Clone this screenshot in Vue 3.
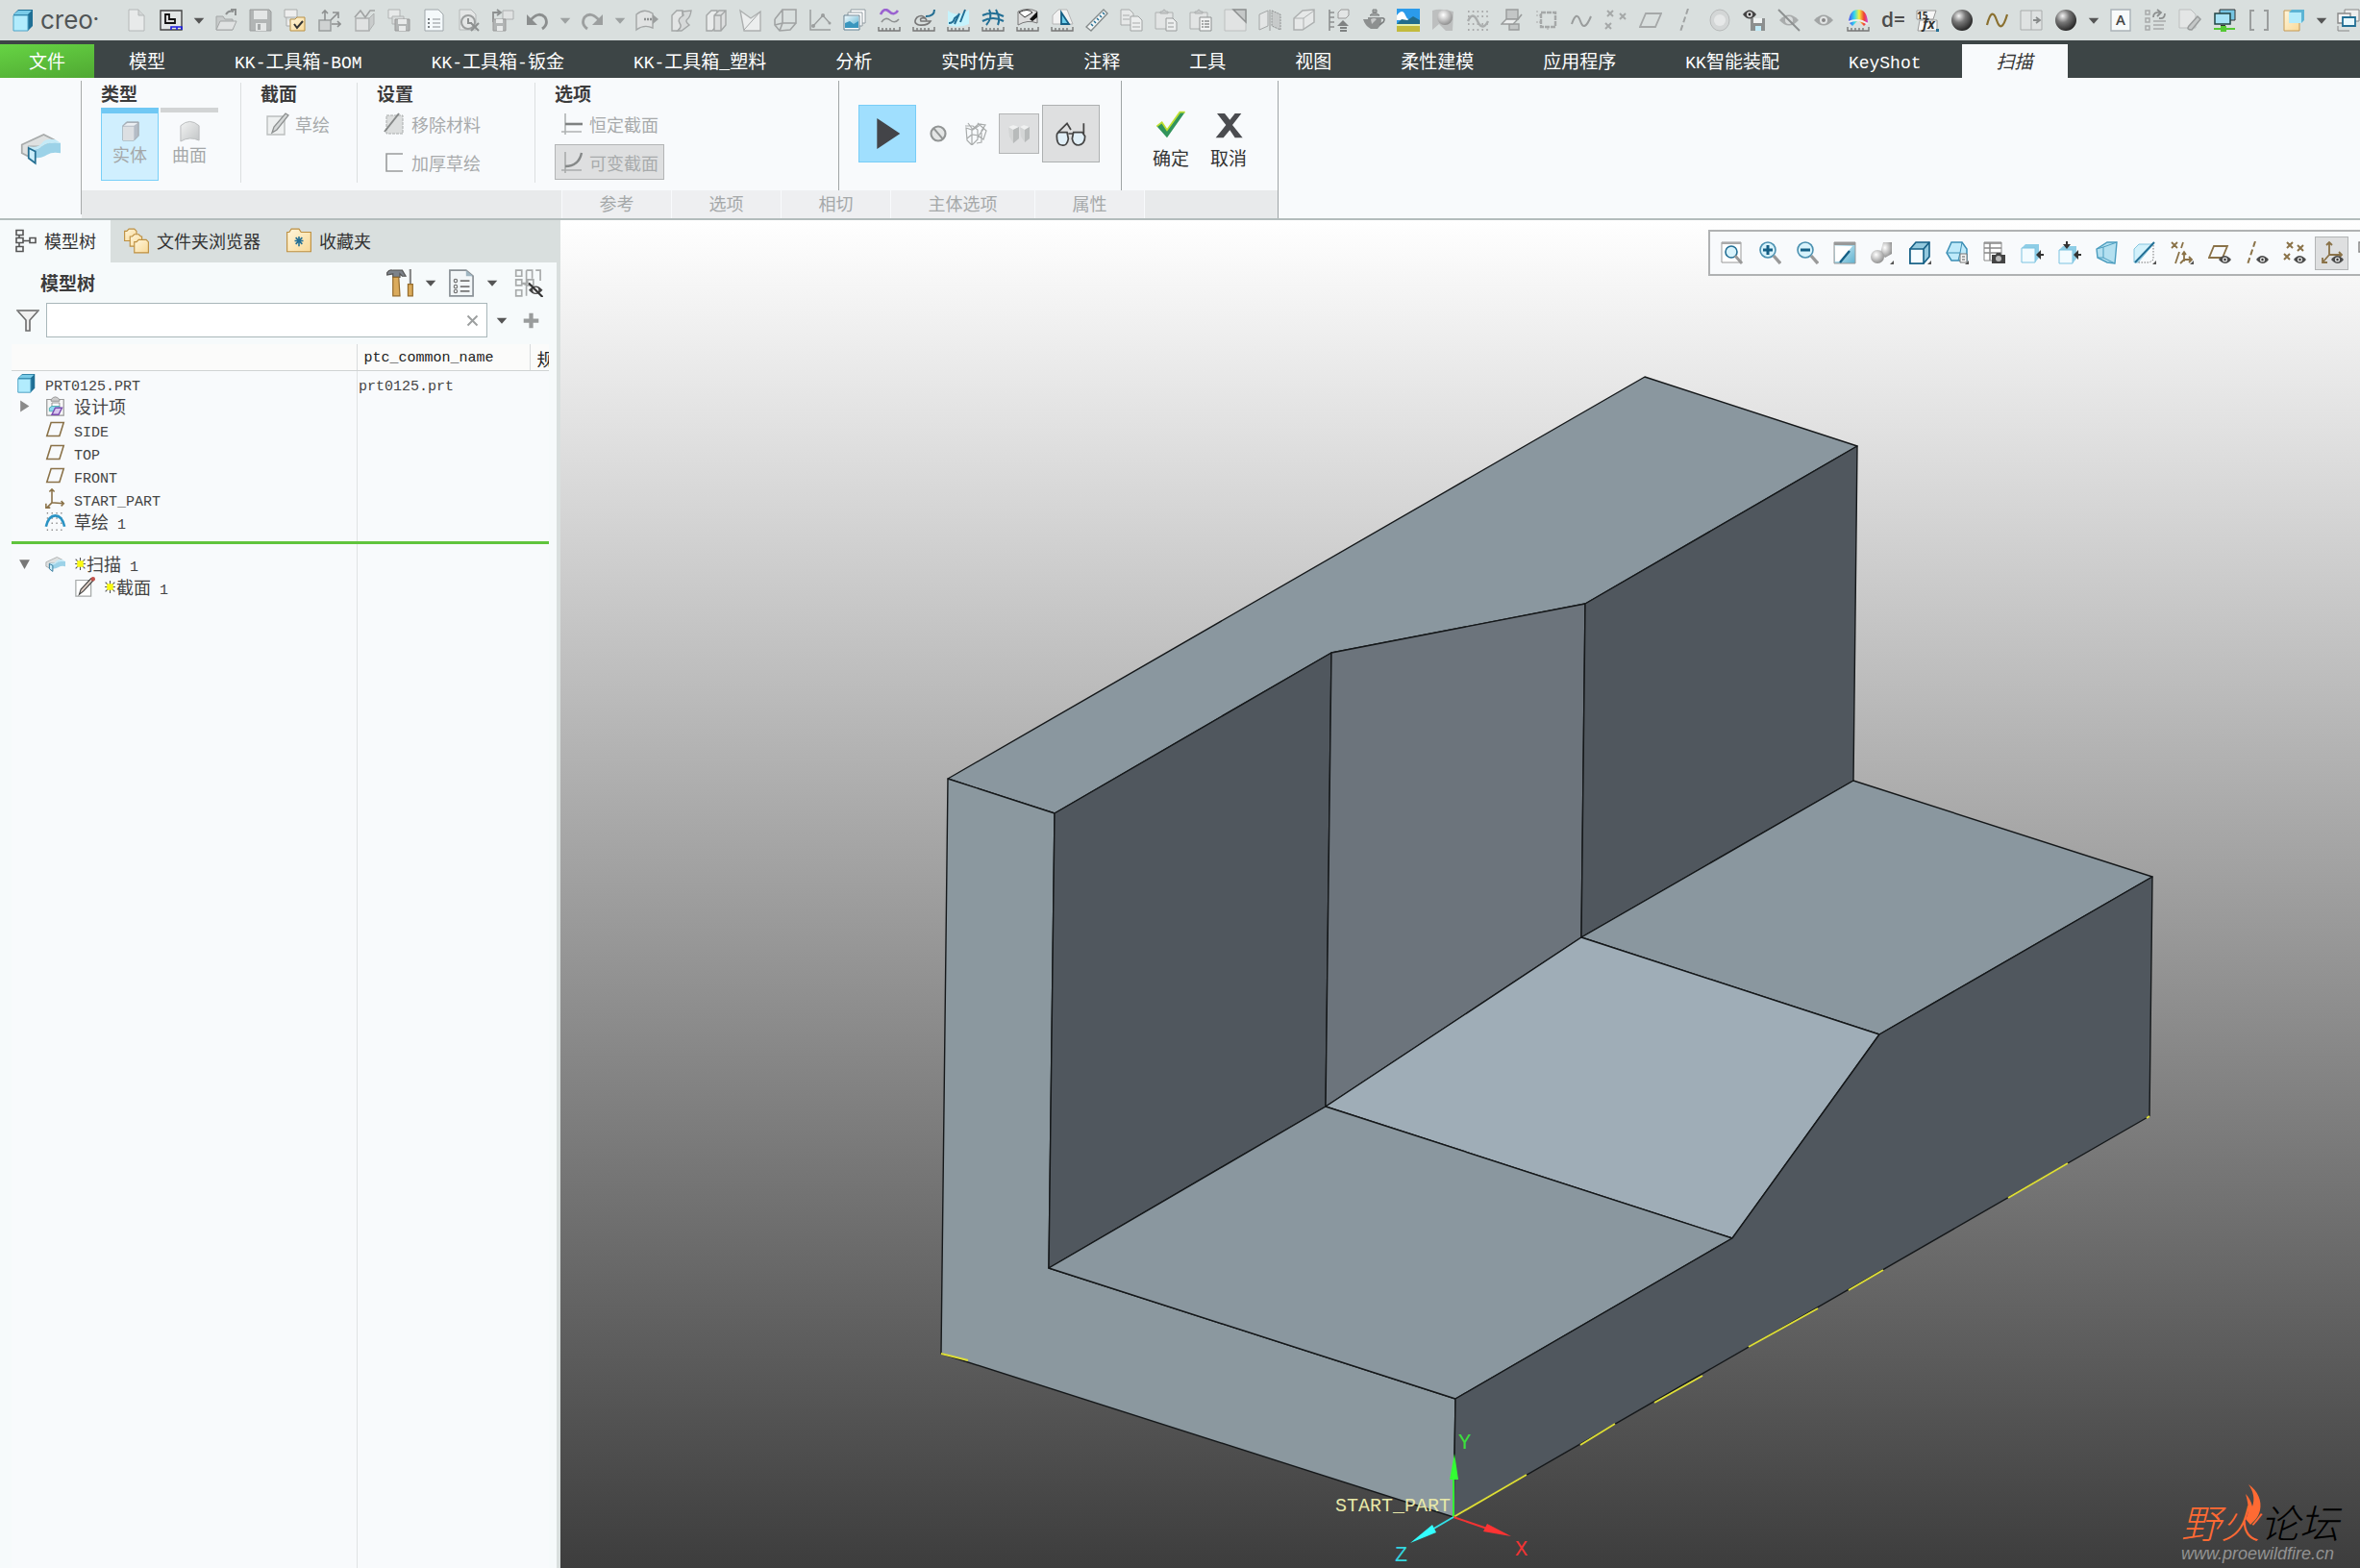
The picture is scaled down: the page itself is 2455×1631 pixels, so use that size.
<template>
  <div class="app">
    <!-- gradients shared by the icons -->
    <svg class="defs" aria-hidden="true">
      <defs>
        <radialGradient id="ball" cx="0.35" cy="0.3" r="0.7">
          <stop offset="0" stop-color="#f4f4f4" />
          <stop offset="0.45" stop-color="#777" />
          <stop offset="1" stop-color="#2b2b2b" />
        </radialGradient>
        <radialGradient id="softBall" cx="0.4" cy="0.35" r="0.7">
          <stop offset="0" stop-color="#fff" />
          <stop offset="1" stop-color="#8a8a8a" />
        </radialGradient>
        <linearGradient id="rainbow">
          <stop offset="0" stop-color="#4a4af0" />
          <stop offset="0.3" stop-color="#30d8f0" />
          <stop offset="0.55" stop-color="#f5f040" />
          <stop offset="0.8" stop-color="#f04030" />
          <stop offset="1" stop-color="#d040e0" />
        </linearGradient>
        <linearGradient id="folder" x1="0" y1="0" x2="1" y2="1">
          <stop offset="0" stop-color="#fff6dc" />
          <stop offset="1" stop-color="#f8d998" />
        </linearGradient>
        <linearGradient id="blueFade" x1="0" y1="0" x2="1" y2="1">
          <stop offset="0" stop-color="#eaf8fd" />
          <stop offset="1" stop-color="#5fb2d0" />
        </linearGradient>
        <linearGradient id="greyFade" x1="0" y1="0" x2="1" y2="1">
          <stop offset="0" stop-color="#f2f3f3" />
          <stop offset="1" stop-color="#c2c5c6" />
        </linearGradient>
      </defs>
    </svg>

    <!-- quick access bar -->
    <header class="quickbar">
      <div class="brand">
        <Icon name="cube" />
        <span class="brand-name">creo<sup>•</sup></span>
      </div>
      <button
        v-for="(name, i) in quickIcons"
        :key="i"
        type="button"
        class="quick"
        :class="{ 'quick--arrow': name === 'arrow' || name === 'arrowOff' }"
        :aria-label="name"
      >
        <Icon :name="name" />
      </button>
    </header>

    <!-- ribbon tabs -->
    <nav class="tabs">
      <a
        v-for="tab in tabs"
        :key="tab"
        href="#"
        class="tab"
        :class="{ 'tab--file': tab === '文件', 'tab--active': tab === activeTab }"
        @click.prevent="activeTab = tab"
      ><Mixed :text="tab" /></a>
    </nav>

    <!-- ribbon -->
    <section class="ribbon">
      <div class="ribbon-feature"><Icon name="sweep" /></div>
      <div class="ribbon-body">
        <div class="ribbon-groups">
          <div class="group group--type">
            <h3>类型</h3>
            <div class="type-list">
              <button type="button" class="type type--on"><Icon name="solid" /><span>实体</span></button>
              <button type="button" class="type"><Icon name="surface" /><span>曲面</span></button>
            </div>
          </div>
          <div class="group group--section">
            <h3>截面</h3>
            <button type="button" class="option"><Icon name="sketch" />草绘</button>
          </div>
          <div class="group group--setting">
            <h3>设置</h3>
            <button type="button" class="option"><Icon name="removeMat" />移除材料</button>
            <button type="button" class="option"><Icon name="thicken" />加厚草绘</button>
          </div>
          <div class="group group--options">
            <h3>选项</h3>
            <button type="button" class="option"><Icon name="constant" />恒定截面</button>
            <button type="button" class="option option--on"><Icon name="variable" />可变截面</button>
          </div>
          <div class="group group--preview">
            <button type="button" class="big big--blue" aria-label="play"><Icon name="play" /></button>
            <button type="button" class="mini" aria-label="none"><Icon name="forbid" /></button>
            <button type="button" class="mini" aria-label="wire"><Icon name="wire" /></button>
            <button type="button" class="mini mini--on" aria-label="shade"><Icon name="shade" /></button>
            <button type="button" class="big" aria-label="glasses"><Icon name="glasses" /></button>
          </div>
          <div class="group group--finish">
            <button type="button" class="finish"><Icon name="ok" />确定</button>
            <button type="button" class="finish"><Icon name="cancel" />取消</button>
          </div>
        </div>
        <div class="panels">
          <span class="panel-lead"></span>
          <button v-for="p in panels" :key="p" type="button" class="panel" :class="{ 'panel--wide': p.length > 2 }">{{ p }}</button>
          <span class="panel-tail"></span>
        </div>
      </div>
    </section>

    <main class="work">
      <!-- navigator -->
      <aside class="side">
        <div class="side-tabs">
          <button type="button" class="side-tab side-tab--on"><Icon name="tree" />模型树</button>
          <button type="button" class="side-tab"><Icon name="folders" />文件夹浏览器</button>
          <button type="button" class="side-tab"><Icon name="favorite" />收藏夹</button>
        </div>
        <div class="side-body">
          <div class="side-head">
            <h2>模型树</h2>
            <button type="button" class="tool" aria-label="settings"><Icon name="hammer" /></button>
            <button type="button" class="drop" aria-label="more"><Icon name="arrow" /></button>
            <button type="button" class="tool" aria-label="show"><Icon name="list" /></button>
            <button type="button" class="drop" aria-label="more"><Icon name="arrow" /></button>
            <button type="button" class="tool tool--last" aria-label="hide"><Icon name="treeHide" /></button>
          </div>
          <div class="filter">
            <label for="filter" aria-label="filter"><Icon name="funnel" /></label>
            <div class="filter-box">
              <input id="filter" v-model="filter" type="text" />
              <button type="button" aria-label="clear" @click="filter = ''"><Icon name="clear" /></button>
            </div>
            <button type="button" class="drop" aria-label="more"><Icon name="arrow" /></button>
            <button type="button" class="add" aria-label="add"><Icon name="plus" /></button>
          </div>
          <div class="grid">
            <table>
              <colgroup>
                <col />
                <col class="col-name" />
                <col class="col-last" />
              </colgroup>
              <thead>
                <tr>
                  <th></th>
                  <th>ptc_common_name</th>
                  <th class="th-cjk">规</th>
                </tr>
              </thead>
              <tbody>
                <tr v-for="row in rows" :key="row.text" :class="{ 'insert-row': row.insert }">
                  <td v-if="row.insert" colspan="3"><div class="insert-line"></div></td>
                  <template v-else>
                    <td>
                      <div class="node" :class="'node--' + row.level">
                        <span v-if="row.level === 1" class="toggle"><Icon v-if="row.toggle" :name="row.toggle" /></span>
                        <Icon :name="row.icon" />
                        <span class="node-text"><Icon v-if="row.fresh" name="star" /><Mixed :text="row.text" /></span>
                      </div>
                    </td>
                    <td><div v-if="row.common" class="node node--name"><Mixed :text="row.common" /></div></td>
                    <td></td>
                  </template>
                </tr>
              </tbody>
            </table>
          </div>
        </div>
      </aside>

      <!-- graphics area -->
      <section class="view">
        <svg class="model" viewBox="583 229 1872 1402" preserveAspectRatio="xMidYMid meet">
          <g class="faces">
            <polygon v-for="(f, i) in faces" :key="i" :points="f.points" :fill="f.fill" />
          </g>
          <path
            class="datum"
            d="M1512 1578L1588 1534M1644 1503L1680 1481M1721 1459L1771 1431M1819 1401L1891 1361M1923 1342L1959 1321M2089 1246L2151 1210M2233 1163L2236 1161M979 1408L1007 1415"
          />
          <g stroke-width="2">
            <path d="M1512 1578V1530" stroke="#33f233" />
            <path d="M1513 1512L1517 1539H1508Z" fill="#33ff33" />
            <path d="M1512 1578L1550 1591" stroke="#f23333" />
            <path d="M1572 1598L1547 1585L1543 1593Z" fill="#ff3333" />
            <path d="M1512 1578L1488 1592" stroke="#33e0e8" />
            <path d="M1467 1605L1490 1586L1494 1594Z" fill="#33ffff" />
          </g>
          <text x="1389" y="1572" class="tag">START_PART</text>
          <text x="1517" y="1507" class="axis" fill="#3be03b">Y</text>
          <text x="1576" y="1618" class="axis" fill="#f23333">X</text>
          <text x="1451" y="1624" class="axis" fill="#33d6e0">Z</text>
        </svg>

        <div class="viewbar">
          <button
            v-for="(name, i) in viewIcons"
            :key="i"
            type="button"
            :class="{ on: name === 'vCsys' }"
            :aria-label="name"
          >
            <Icon :name="name" />
          </button>
        </div>

        <div class="watermark">
          <div class="wm-name">
            <span class="wm-hot">野火</span><span>论坛</span>
            <svg class="flame" viewBox="0 0 20 44"><path d="M6 1C16 8 20 18 18 28C16 36 12 39 8 43L3 37C8 30 5 18 3 11C6 14 9 19 10 24C13 16 11 8 6 1Z" fill="#ff6a33" /></svg>
          </div>
          <div class="wm-url">www.proewildfire.cn</div>
        </div>
      </section>
    </main>
  </div>
</template>

<script setup>
import { h, ref } from 'vue'

const activeTab = ref('扫描')
const filter = ref('')

// icon artwork on a 24 x 24 grid
const eye = '<path d="M11 19q6-8 13 0q-6 8-13 0z" fill="#4a4a4a"/><circle cx="17.500" cy="19" r="2.600" fill="#ddd"/><circle cx="17.500" cy="19" r="1.200" fill="#333"/>'
const ruler = '<path d="M1 19v4h22v-4M5 20v3M9 20v3M13 20v3M17 20v3" fill="none" stroke="#777" stroke-width="1.4"/>'
const clip = '<path d="M1 4h18v17H1z" fill="#e2e4e4" stroke="#adb0b0"/><path d="M6 5V3h2q2-4 4 0h2v2z" fill="#c5c8c8" stroke="#adb0b0"/>'
const corner = '<path d="M24 20v4h-4z" fill="#555"/>'
const disk = '<path d="M8 11h15v12H8z" fill="#b2b5b5" stroke="#999"/><path d="M11 11h9v5h-9zM12 18h7v5h-7z" fill="#e8eaea"/>'
const plane = '<path d="M7 4H22L17 20H2Z" fill="none" stroke="#8a7248" stroke-width="1.8"/>'

const art = {
  cube: '<path d="M2 6L7 1H22V18L17 23H2Z" fill="#1f6f95"/><path d="M2 6L7 2H21L17 6Z" fill="#79cbe8"/><path d="M2 7H17V23H2Z" fill="#b2ecfd" stroke="#4fa5c8"/>',
  arrow: '<path d="M5 9h14l-7 8z" fill="#555"/>',
  arrowOff: '<path d="M5 9h14l-7 8z" fill="#9da1a1"/>',
  page: '<path d="M4 1h10l6 6v16H4z" fill="#e8eaea" stroke="#b4b8b8"/><path d="M14 1v6h6" fill="#d2d5d5" stroke="#b4b8b8"/>',
  window: '<path d="M1 2h22v20H1z" fill="#e2e6e6" stroke="#444" stroke-width="1.4"/><path d="M6 6h4v5h6v4H6z" fill="#ddd" stroke="#111" stroke-width="1.8"/><path d="M12 22v-3h11v3M18 19v3" fill="none" stroke="#1c1ce0" stroke-width="1.6"/>',
  open: '<path d="M2 22V8h7l2 3h8v11z" fill="#c7caca" stroke="#a3a6a6"/><path d="M2 22L6 13H23L19 22Z" fill="#e0e2e2" stroke="#a3a6a6"/><path d="M12 6q3-5 8-3M17 1h5v6" fill="none" stroke="#8d9090" stroke-width="2"/>',
  save: '<path d="M1 1h20l2 2v20H1z" fill="#b2b5b5" stroke="#9b9e9e"/><path d="M5 2h14v9H5zM7 15h11v8H7z" fill="#e4e6e6"/><path d="M9 16h3v6H9z" fill="#a5a8a8"/>',
  check: '<path d="M1 1h13v8H1zM3 9v9h6" fill="#eee" stroke="#a9acac"/><path d="M7 11h5l2-2h8v14H7z" fill="url(#folder)" stroke="#b89045"/><path d="M11 16l3 4 6-7" fill="none" stroke="#333" stroke-width="2"/>',
  move: '<path d="M1 12h12v11H1z" fill="#cfd2d2" stroke="#9b9e9e" stroke-width="1.5"/><path d="M7 12V2M4 5l3-3 3 3M13 12l7-7M15 4h6v6M14 16h9M20 13l3 3-3 3" fill="none" stroke="#8d9090" stroke-width="1.6"/>',
  model: '<path d="M3 10h14v13H3z" fill="#e0e2e2" stroke="#adb0b0" stroke-width="1.4"/><path d="M17 10l5-5v11l-5 7z" fill="#c9cccc" stroke="#adb0b0"/><path d="M2 9l6-7 5 7 5-7h5" fill="#e0e2e2" stroke="#a0a3a3" stroke-width="1.6"/>',
  saveCopy: '<path d="M1 1h12v9H1z" fill="#e7e9e9" stroke="#b0b3b3"/><path d="M5 8h12v8H5z" fill="#d9dcdc" stroke="#b0b3b3"/>' + disk,
  props: '<path d="M3 1h14l5 5v17H3z" fill="#f4f9fb" stroke="#9fa6aa"/><path d="M11 11h8M11 15h8M11 19h8" stroke="#8a9094" stroke-width="1.2"/><path d="M6 10h2v2H6zM6 14h2v2H6zM6 18h2v2H6z" fill="#7a8084"/>',
  erase: '<path d="M3 1h12l5 5v16H3z" fill="#e4e6e6" stroke="#b4b8b8"/><circle cx="12" cy="14" r="7" fill="none" stroke="#9b9e9e" stroke-width="2"/><path d="M12 10v5h4M15 15l8 8M23 15l-8 8" stroke="#8d9090" stroke-width="2" fill="none"/>',
  saveAs: '<path d="M12 2h11v9H12z" fill="#e0e2e2" stroke="#adb0b0"/><path d="M2 14V4h7M6 1l4 3-4 3" fill="none" stroke="#8d9090" stroke-width="1.8"/><path d="M2 11h13v12H2z" fill="#b2b5b5" stroke="#999"/><path d="M5 11h7v4H5zM6 18h6v5H6z" fill="#e8eaea"/>',
  undo: '<path d="M4 13Q13 2 20 9Q24 16 17 21" fill="none" stroke="#8b8e8e" stroke-width="2.8"/><path d="M1 6v11h11z" fill="#8b8e8e"/>',
  redo: '<path d="M20 13Q11 2 4 9Q0 16 7 21" fill="none" stroke="#9c9f9f" stroke-width="2.8"/><path d="M23 6v11H12z" fill="#9c9f9f"/>',
  extrude: '<path d="M1 22V6q8-7 17-1v15q-9-4-17 2z" fill="#e0e2e2" stroke="#a3a6a6" stroke-width="1.4"/><path d="M9 11h9" stroke="#8d9090" stroke-width="2.4" stroke-dasharray="2 1"/><path d="M18 6l6 5-6 5z" fill="#9b9e9e"/>',
  bend: '<path d="M2 7l5-5h6v15l-5 6H2z" fill="#e3e5e5" stroke="#a3a6a6" stroke-width="1.4"/><path d="M13 3l9-1q-1 7-4 9t2 6l-8 6H8q5-4 2-8t4-8z" fill="#d6d9d9" stroke="#a3a6a6" stroke-width="1.4"/>',
  bars: '<path d="M2 7l5-5h6v15l-5 6H2z" fill="#e9ebeb" stroke="#a3a6a6" stroke-width="1.4"/><path d="M10 7l5-5h7v15l-5 6h-7zM10 7h7v16M17 7l5-5" fill="#dcdede" stroke="#a3a6a6" stroke-width="1.4"/>',
  draft: '<path d="M1 2l11 8 10-7v20H5z" fill="#eceeee" stroke="#adb0b0" stroke-width="1.4"/><path d="M5 22L22 3" stroke="#a3a6a6"/>',
  shell: '<path d="M9 1h14v14H9zM1 11l8-10M1 11v6l5 6 11-1 6-7M6 23l3-8M1 17l8-2" fill="none" stroke="#a0a3a3" stroke-width="1.6"/>',
  graph: '<path d="M2 1v21h21" fill="none" stroke="#9b9e9e" stroke-width="1.5"/><path d="M5 18l10-11 7 8" fill="none" stroke="#9b9e9e" stroke-width="1.4"/><g fill="#9b9e9e"><circle cx="5" cy="18" r="2"/><circle cx="15" cy="7" r="2"/><circle cx="22" cy="15" r="1.500"/></g>',
  gallery: '<path d="M8 1h15v14H8z" fill="#fff" stroke="#8f9aa0"/><path d="M5 4h15v14H5z" fill="#fff" stroke="#8f9aa0"/><path d="M1 7h16v15H1z" fill="#fff" stroke="#5e7f90"/><path d="M2 8h14v12H2z" fill="url(#blueFade)"/><path d="M2 20v-5l5-2 4 3 5-3v7z" fill="#3a96be"/>',
  waves: '<path d="M3 6q4-8 9-3t9-1" fill="none" stroke="#9a62d0" stroke-width="2.6"/><path d="M4 14q4-6 9-2t9-1" fill="none" stroke="#8d9090" stroke-width="1.6"/>' + ruler,
  curl: '<path d="M15 12q-4-7-10-3-5 6 2 8 9 1 12-4H9q-2-4 4-3" fill="none" stroke="#777" stroke-width="1.6"/><path d="M23 1q0 7-9 7" fill="none" stroke="#246e92" stroke-width="2"/>' + ruler,
  section: '<path d="M1 2q11 8 22-1v15q-11 5-22 1z" fill="#c5f3fc"/><path d="M8 16l5-11M14 14l5-13M2 15q5 0 6-5l5-4" fill="none" stroke="#226f95" stroke-width="2"/>' + ruler,
  net: '<path d="M1 7q11-5 22 1M1 13q11-6 22 0M8 1q4 8-3 16M15 1q5 9 2 16" fill="none" stroke="#226f95" stroke-width="2"/>' + ruler,
  zebra: '<path d="M2 3q10-5 20 0v12q-10-4-20 2z" fill="#ddd" stroke="#777"/><path d="M3 4q9-5 14 0l-8 5z" fill="#fff" stroke="#333"/><path d="M14 11l8-8v6l-5 4z" fill="#111"/>' + ruler,
  angle: '<path d="M2 16V7l6-6h9l6 15z" fill="#f2f2f2" stroke="#b5b5b5"/><path d="M11 16V4l8 12z" fill="#6ccdeb" stroke="#155f85" stroke-width="1.8"/>' + ruler,
  measure: '<path d="M1 19L19 1l4 4L6 23z" fill="#f3f6f6" stroke="#858b8b" stroke-width="1.4"/><path d="M6 16l2 2M9 13l2 2M12 10l2 2M15 7l2 2M18 4l2 2" stroke="#226f95" stroke-width="1.5"/>',
  copy: '<path d="M1 1h9l4 4v12H1z" fill="#e6e8e8" stroke="#a8abab"/><path d="M11 8h8l4 4v11H11z" fill="#eceeee" stroke="#a0a3a3"/><path d="M3 7h7M3 11h7M13 15h8M13 19h8" stroke="#a8abab"/>',
  paste: clip + '<path d="M12 10h7l4 4v9H12z" fill="#eceeee" stroke="#999c9c"/><path d="M14 15h6M14 19h6" stroke="#999c9c"/>',
  pasteList: clip + '<path d="M11 9h12v14H11z" fill="#f2f3f3" stroke="#8e9191"/><path d="M13 13h2M16 13h5M13 16h2M16 16h5M13 19h2M16 19h5" stroke="#8e9191" stroke-width="1.5"/>',
  fold: '<path d="M1 1h22v22H1z" fill="#e1e3e3" stroke="#bcbfbf"/><path d="M10 1h13v13z" fill="#c5c8c8" stroke="#8d9090" stroke-width="1.5"/>',
  mirror: '<path d="M1 6l9-4v16l-9 4z" fill="#e3e5e5" stroke="#a3a6a6"/><path d="M12 1v22" stroke="#999"/><path d="M14 2l9 4v16l-9-4z" fill="#c7caca" stroke="#8d9090" stroke-dasharray="2 1"/>',
  block: '<path d="M1 10L10 2l12-1v13L10 22H1z" fill="#e6e8e8" stroke="#adb0b0" stroke-width="1.5"/><path d="M1 10h10v12M11 10L22 2" fill="none" stroke="#adb0b0"/>',
  level: '<path d="M2 1v22M2 4h5M2 9h5M2 14h5M2 19h5" stroke="#8d9090" stroke-width="1.6"/><path d="M11 4l3-3h8v6l-3 3h-8z" fill="#e3e5e5" stroke="#999"/><path d="M16 12l6 6H10z" fill="#7f8282"/><path d="M13 20h7M13 23h7" stroke="#7f8282" stroke-width="2"/>',
  teapot: '<path d="M6 9h13q3 6-3 12H9Q3 18 1 11h5z" fill="#8d9090"/><path d="M8 7q5-5 10 0zM11 4h4V1h-4z" fill="#a5a8a8" stroke="#7d8080"/><path d="M19 10q6-1 3 4l-4 3" fill="none" stroke="#7d8080" stroke-width="1.6"/><path d="M9 11q4-2 6 0l-5 5z" fill="#c8caca"/>',
  picture: '<path d="M0 0h24v24H0z" fill="#2b9bea"/><path d="M0 7q6-8 9 0t15 5H0z" fill="#fff"/><path d="M0 16l5-5 6 1 6-4 7 4v5H0z" fill="#226d8c"/><path d="M0 16h24v3H0z" fill="#e5f0b0"/><path d="M0 18h24v6H0z" fill="#c3bb3d"/>',
  render: '<path d="M1 2q8-3 22 1l-1 20H15L8 16 1 22z" fill="#bdbfbf"/><circle cx="14" cy="9" r="8" fill="url(#softBall)"/>',
  dots: '<path d="M2 3h22M2 8h22M2 16h22M2 22h22" stroke="#999" stroke-width="1.6" stroke-dasharray="1.6 3.2"/><path d="M2 13q5-11 10 0t11 0" fill="none" stroke="#aaadad" stroke-width="2.4"/>',
  jog: '<path d="M6 1h12v10H6zM9 16h10v6H9z" fill="#c3c6c6" stroke="#999c9c" stroke-width="1.4"/><path d="M1 16l5-5h12l-5 5z" fill="#eceeee" stroke="#999c9c" stroke-width="1.4"/><path d="M18 11l4-5" stroke="#999c9c" stroke-width="1.6"/>',
  frame: '<path d="M6 4h15v15H6z" fill="none" stroke="#a5a8a8" stroke-width="2.4" stroke-dasharray="5 1"/><path d="M1 7h4M1 14h4M1 3h3M13 20v3" stroke="#aaa" stroke-dasharray="2 1"/>',
  spline: '<path d="M2 16q5-15 9-3t11-5" fill="none" stroke="#999c9c" stroke-width="2"/>',
  points: '<path d="M3 2l6 6M9 2L3 8M16 5l6 6M22 5l-6 6M1 15l6 6M7 15l-6 6" stroke="#a5a8a8" stroke-width="2"/>',
  planeOff: '<path d="M7 5H23L17 19H1Z" fill="none" stroke="#a5a8a8" stroke-width="1.8"/>',
  axisOff: '<path d="M15 0L7 24" stroke="#a0a3a3" stroke-width="2" stroke-dasharray="6 3"/>',
  sphereOff: '<ellipse cx="12" cy="12" rx="10" ry="11" fill="#d3d6d6" stroke="#b7baba"/><circle cx="12" cy="12" r="6" fill="#e6e8e8"/>',
  eyeSave: '<path d="M8 10h15v13H8z" fill="#8c8f8f"/><path d="M11 10h9v5h-9z" fill="#eef1f1"/><path d="M13 18h6v5h-6z" fill="#c0e9f6"/><path d="M0 6q7-9 14 0q-7 9-14 0z" fill="#444"/><circle cx="7" cy="6" r="3" fill="#ddd"/><circle cx="7" cy="6" r="1.400" fill="#222"/>',
  eyeOff: '<path d="M2 12q10-11 20 0q-10 11-20 0z" fill="#a9acac"/><circle cx="12" cy="12" r="4" fill="#d9dcdc"/><path d="M1 1l22 22" stroke="#8d9090" stroke-width="2"/>',
  eye: '<path d="M2 12q10-11 20 0q-10 11-20 0z" fill="#a2a5a5"/><circle cx="12" cy="12" r="4" fill="#e1e4e4"/><circle cx="12" cy="12" r="2" fill="#888"/>',
  rainbow: '<path d="M2 14Q3 1 12 1T22 14L18 18 12 12 6 18z" fill="url(#rainbow)"/><path d="M2 14q10-5 20 2" fill="none" stroke="#eee" stroke-width="2"/>' + ruler,
  dim: '<text x="0" y="19" font-family="Open Sans, sans-serif" font-size="21" font-weight="600" fill="#4c4c4c">d=</text>',
  fx: '<path d="M1 2h20l-3 9H1zM4 12h18v11H2z" fill="#f7f7f7" stroke="#999"/><text x="1" y="11" font-family="Open Sans, sans-serif" font-size="10" font-weight="700" fill="#333">15</text><text x="7" y="21" font-family="Open Sans, sans-serif" font-size="14" font-style="italic" font-weight="700" fill="#333">fx</text><path d="M21 21h3v3h-3z" fill="#226f95"/>',
  ball: '<ellipse cx="12" cy="12" rx="11" ry="11" fill="url(#ball)"/>',
  goldWave: '<path d="M2 17q5-20 10-5t11-6" fill="none" stroke="#8a7030" stroke-width="2.2"/>',
  dock: '<path d="M1 2h22v20H1z" fill="#dfe2e2" stroke="#a9acac"/><path d="M12 2v20" stroke="#a9acac"/><path d="M14 12h7M17 9l4 3-4 3" fill="none" stroke="#888b8b" stroke-width="1.8"/>',
  letter: '<path d="M2 1h20v22H2z" fill="#f8fafb" stroke="#aab2b8" stroke-width="1.4"/><text x="7" y="17" font-family="Open Sans, sans-serif" font-size="15" font-weight="600" fill="#444">A</text>',
  swap: '<path d="M2 2h4v4H2zM2 10h4v4H2zM2 18h4v4H2zM10 13h13M10 17h11M10 21h11" fill="none" stroke="#a8abab" stroke-width="1.5"/><path d="M10 9q0-6 7-5M14 1l4 3-4 4M22 5q0 6-6 5" fill="none" stroke="#8d9090" stroke-width="1.8"/>',
  attach: '<path d="M1 1h12l5 5v14H1z" fill="#e4e6e6" stroke="#bcbfbf"/><path d="M11 18L20 8l3 3-9 11q-6 0-3-4z" fill="#c5c8c8" stroke="#999c9c" stroke-width="1.5"/>',
  server: '<path d="M7 1h16v11H7z" fill="#76c4e2" stroke="#333"/><path d="M2 5h16v11H2z" fill="#a7e3f6" stroke="#244" stroke-width="1.5"/><path d="M8 17h5v3H8z" fill="#333"/><path d="M1 20h22v2H1zM8 18h6v6H8z" fill="#55c934"/>',
  brackets: '<path d="M7 2H3v20h4M17 2h4v20h-4" fill="none" stroke="#9b9e9e" stroke-width="2"/>',
  box: '<path d="M2 2h16v21H2z" fill="url(#folder)" stroke="#c59a55"/><path d="M7 4l3-3h13v11l-3 3H7z" fill="#5db4d4"/><path d="M7 4h13v11H7z" fill="#b5ecfb"/>',
  cascade: '<path d="M8 1h15v12H8z" fill="#eee" stroke="#888"/><path d="M1 5h13v10H1z" fill="#f5f5f5" stroke="#888" stroke-width="1.4"/><path d="M6 9h13v9H6z" fill="#e8f8fd" stroke="#226f95" stroke-width="1.8"/><path d="M1 18v5h12" fill="none" stroke="#888"/>',
  sweep: '<path d="M1 10L14 4l6 3-7 4H5v6l-4-2z" fill="#dfe1e1" stroke="#a8abab"/><path d="M5 12q4 2 8-1t11-2v6q-5-1-8 1t-8 2v3z" fill="#9cd2e8"/><path d="M5 12q4 2 8-1t11-2l-3-2q-6-1-8 2t-8 2z" fill="#c5eaf7"/><path d="M5 12l4 2v7l-4-3z" fill="#cdeefa" stroke="#246e92"/>',
  solid: '<path d="M4 6l4-4h13v15l-5 5H4z" fill="#b4bcc6" stroke="#9a9fa4"/><path d="M4 7h12v15H4z" fill="#dcdfe2"/><path d="M5 6l4-3h11l-4 3z" fill="#eceff2"/>',
  surface: '<path d="M2 23V6q10-9 20 0v16q-10-5-20 1z" fill="url(#greyFade)" stroke="#b9bcbd"/>',
  sketch: '<path d="M1 4h18v19H1z" fill="#eef0f0" stroke="#bcbfbf" stroke-width="1.4"/><path d="M6 21l2-6L20 1l3 2L11 18z" fill="#d4d7d7" stroke="#8d9090" stroke-width="1.3"/>',
  sketchOn: '<path d="M1 4h18v19H1z" fill="#fff" stroke="#a5a8a8" stroke-width="1.4"/><path d="M5 21l2-6L19 2l3 2L10 17z" fill="#e0cfc5" stroke="#444" stroke-width="1.3"/><circle cx="21.500" cy="2.500" r="2.500" fill="#c2504a"/>',
  removeMat: '<path d="M4 3h17v19H4z" fill="#dcdede" stroke="#a9acac" stroke-dasharray="3 1"/><path d="M2 20L17 1" stroke="#858888" stroke-width="2"/>',
  thicken: '<path d="M21 3H4v18h17" fill="none" stroke="#999c9c" stroke-width="1.6"/>',
  constant: '<path d="M5 1v22M1 20h21" stroke="#b0b3b3" stroke-width="1.6"/><path d="M5 12h18" stroke="#7f8282" stroke-width="2.6"/>',
  variable: '<path d="M5 1v22M1 20h21" stroke="#a9acac" stroke-width="1.6"/><path d="M5 16q14 0 17-14" fill="none" stroke="#858888" stroke-width="2.4"/>',
  play: '<path d="M4 0L22 12L4 24Z" fill="#434448"/>',
  forbid: '<circle cx="12" cy="12" r="9" fill="#e3e5e5" stroke="#929595" stroke-width="2.6"/><path d="M6 5l12 14" stroke="#929595" stroke-width="2.4"/>',
  wire: '<path d="M1 4h8l5 4v10l-6 6-5-5-1-13 6 2 7-6 7 1-4 6v12l-5 1M8 8v15M3 17l5-4 7 1 6-8M14 1l9 8-3 9-6-4M4 1l5 7 9-6" fill="none" stroke="#a9acac" stroke-width="1.2"/>',
  shade: '<path d="M1 5l5-2 6 2v12l-6 5-4-7zM13 5l4-2 6 2v12l-5 4-4-6z" fill="#d3d5d5"/><path d="M1 5l5-2 6 2-6 3zM13 5l4-2 6 2-5 3z" fill="#f0f1f1"/><path d="M6 8l6-3v12l-6 5zM18 8l5-3v12l-5 4z" fill="#b8bbbb"/>',
  glasses: '<path d="M1 14q0-3 2-3h6l1 5q-1 6-5 5-4 0-4-7zM14 11h7l2 3q0 6-5 7-4 0-5-5z" fill="#e1eff7" stroke="#444" stroke-width="1.3"/><path d="M2 11l7-7 3 5M22 12V4M10 12h4" fill="none" stroke="#444" stroke-width="1.3"/>',
  ok: '<path d="M1 13l4-3 4 6L19 2h4L9 22z" fill="#32945c"/><path d="M1 13l4-3 4 6L19 2h4" fill="none" stroke="#bfe030" stroke-width="1.3"/>',
  cancel: '<path d="M3 3h6l4 5 4-5h5l-7 9 8 10h-6l-4-6-5 6H2l8-10z" fill="#4b4c50"/>',
  tree: '<path d="M2 1h7v5H2zM2 9h7v5H2zM2 18h7v5H2zM16 9h6v5h-6zM5 6v3M5 14v4M9 12h7" fill="none" stroke="#555" stroke-width="1.6"/>',
  folders: '<g fill="url(#folder)" stroke="#bd8f40"><path d="M1 3h2l2-2h5l2 2v9H1z"/><path d="M6 8h2l2-2h4l2 2h1v9H6z"/><path d="M10 13h2l2-2h7l2 2v10H10z"/></g>',
  favorite: '<path d="M1 4h2l2-3h7l2 3h9v18H1z" fill="url(#folder)" stroke="#bd8f40"/><path d="M12 8v9M8 12h8M9 9l6 6M15 9l-6 6" stroke="#226f95" stroke-width="1.4"/>',
  hammer: '<path d="M1 3q2-3 5-2h8l3 5h-3l-2-2v3H6V4L1 5z" fill="#7d838a" stroke="#555"/><path d="M6 7h5l1 16H6z" fill="#dbab5c" stroke="#946b2b"/><path d="M20 1h1v12" fill="none" stroke="#888" stroke-width="1.8"/><path d="M19 13h4v10h-4z" fill="#dbab5c" stroke="#946b2b"/>',
  list: '<path d="M2 1h14l6 5v17H2z" fill="#f2f6f8" stroke="#8a9196" stroke-width="1.4"/><path d="M16 1v5h6" fill="#9fb6c2"/><path d="M11 10h8M11 15h8M11 19h8" stroke="#777" stroke-width="1.4"/><circle cx="7" cy="10" r="1.400" fill="none" stroke="#777"/><circle cx="7" cy="15" r="1.400" fill="none" stroke="#777"/><circle cx="7" cy="19" r="1.400" fill="none" stroke="#777"/>',
  treeHide: '<path d="M1 1h5v5H1zM1 9h5v5H1zM1 18h5v5H1zM6 12h5V9h5v5h-5zM10 1h5v7M18 1h4v9M10 1v22" fill="none" stroke="#a8abab" stroke-width="1.4"/><path d="M12 18q6-7 12 0q-6 7-12 0z" fill="#444"/><circle cx="18" cy="18" r="2.500" fill="#eee"/><path d="M12 12l12 12" stroke="#333" stroke-width="1.8"/>',
  funnel: '<path d="M1 2h22l-9 10v11h-4V12z" fill="#f0f0f0" stroke="#6c6c6c" stroke-width="1.6"/><path d="M1 2h22" stroke="#888" stroke-width="2"/>',
  clear: '<path d="M4 4l16 16M20 4L4 20" stroke="#9c9f9f" stroke-width="3"/>',
  plus: '<path d="M12 1v22M1 12h22" stroke="#999c9c" stroke-width="6"/>',
  closed: '<path d="M4 1l17 11-17 11z" fill="#8a8a8a"/>',
  opened: '<path d="M2 4h20L12 22z" fill="#777"/>',
  design: '<path d="M2 4h20v19H2z" fill="#f7f7f7" stroke="#999" stroke-width="1.4"/><path d="M7 4q5-6 10 0v2H7z" fill="#ccc" stroke="#888"/><path d="M8 8h9v6H8z" fill="#fff" stroke="#888"/><path d="M5 14l3-2h9v6H5z" fill="#8fd8f2" stroke="#4aa"/><path d="M12 14h8l-4 8H8z" fill="#d8c6ef" stroke="#7a4cb0" stroke-width="1.6"/>',
  plane,
  csys: '<path d="M8 1v16l14 1M8 17l-6 6M5 4l3-3 3 3M19 15l3 3-3 3M1 18v5h5" fill="none" stroke="#8a7248" stroke-width="1.8"/>',
  curve: '<path d="M2 2h22M2 8h22M2 14h22M2 22h22" stroke="#888" stroke-width="1.5" stroke-dasharray="1.5 4"/><path d="M1 18Q4 5 12 5t11 13" fill="none" stroke="#2b93c4" stroke-width="3"/>',
  star: '<path d="M12 0v24M2 12h20M3 3l18 18M21 3L3 21" stroke="#555" stroke-width="2"/><path d="M6 6h12v12H6z" fill="#fafa10"/>',
  vFit: '<path d="M1 1h20v21H1z" fill="#fff" stroke="#999"/><path d="M1 2h20" stroke="#aaa" stroke-width="2"/><circle cx="11" cy="11" r="6" fill="#d8f3fc" stroke="#226f95" stroke-width="1.6"/><path d="M15 15l7 8" stroke="#999" stroke-width="3"/>',
  vIn: '<circle cx="10" cy="9" r="8" fill="#d8f3fc" stroke="#4a90b0" stroke-width="1.600"/><path d="M10 4v10M5 9h10" stroke="#155f85" stroke-width="3"/><path d="M16 15l7 8" stroke="#999" stroke-width="3.400"/>',
  vOut: '<circle cx="10" cy="9" r="8" fill="#d8f3fc" stroke="#4a90b0" stroke-width="1.600"/><path d="M5 9h10" stroke="#155f85" stroke-width="3"/><path d="M16 15l7 8" stroke="#999" stroke-width="3.400"/>',
  vPaint: '<path d="M1 1h22v22H1z" fill="url(#blueFade)" stroke="#999"/><path d="M1 1h22v3H1z" fill="#999"/><path d="M2 5h18L7 21q-3 0-5 0z" fill="#fff"/><path d="M7 22L17 10" stroke="#155f85" stroke-width="2.400"/>',
  vBalls: '<path d="M13 1h9v12l-7 4-5-5z" fill="url(#softBall)"/><circle cx="7" cy="16" r="7" fill="url(#softBall)"/>' + corner,
  vCube: '<path d="M2 8l6-7h14v15l-6 7H2z" fill="#93c9de" stroke="#155f85" stroke-width="1.6"/><path d="M2 8h14v15H2zM16 8l6-7" fill="#f4fcff" stroke="#155f85" stroke-width="1.6"/>' + corner,
  vSaved: '<path d="M1 12L6 1h11l5 7v12H6z" fill="#bfeafa" stroke="#3c8fb5" stroke-width="1.5"/><path d="M1 12h14L17 1M15 12l-2 8" fill="none" stroke="#3c8fb5"/><path d="M15 13h7v9h-7z" fill="#f5f5f5" stroke="#777"/><path d="M17 16h3M17 19h3" stroke="#555"/>' + corner,
  vShot: '<path d="M1 1h18v19H1z" fill="#fff" stroke="#888"/><path d="M1 2h18M1 7h18M1 12h18M7 2v18" stroke="#888" stroke-width="1.5"/><path d="M9 14h4l1-2h4l1 2h4v9H9z" fill="#444"/><circle cx="16" cy="18" r="3" fill="#bbb"/>',
  vPushR: '<path d="M1 7l4-4h14v14l-4 5H1z" fill="#8ecde6"/><path d="M1 7h14v15H1z" fill="#f2fbff" stroke="#7cc3e0"/><path d="M24 14h-6" stroke="#333" stroke-width="2"/><path d="M21 9l-5 5 5 5z" fill="#333"/>',
  vPushD: '<path d="M1 9l4-4h14v13l-4 5H1z" fill="#8ecde6"/><path d="M1 9h14v14H1z" fill="#f2fbff" stroke="#7cc3e0"/><path d="M24 14h-6M9 0v4" stroke="#333" stroke-width="2"/><path d="M21 9l-5 5 5 5zM5 3h8L9 8z" fill="#333"/>',
  vPersp: '<path d="M1 8L12 1h10l-2 22-8-1-10-5z" fill="#b4e0f0" stroke="#4c9dbf" stroke-width="1.4"/><path d="M8 6l14-5M8 6v11l12 6M1 8l7-2M2 17h6" fill="none" stroke="#4c9dbf"/>',
  vCut: '<path d="M1 8l5-5h15L5 22H1z" fill="#d3f1fb" stroke="#86c6df"/><path d="M21 4v15l-4 3H5" fill="none" stroke="#777" stroke-dasharray="1.5 1.5"/><path d="M2 22L22 1" stroke="#226f95" stroke-width="2"/>' + corner,
  vDatum: '<path d="M1 1l6 6M7 1L1 7M13 1l-2 6M9 11l-4 12M14 21v-9M14 19h8M14 19l-4 4M12 14l2-3 2 3M19 16l3 3-3 3" fill="none" stroke="#8a7248" stroke-width="1.800"/>' + corner,
  vPlane: '<path d="M6 5H20L15 17H1Z" fill="none" stroke="#8a7248" stroke-width="1.8"/>' + eye,
  vAxis: '<path d="M10 0L2 24" stroke="#8a7248" stroke-width="2" stroke-dasharray="6 3"/>' + eye,
  vPoint: '<path d="M4 1l6 6M10 1L4 7M15 4l6 6M21 4l-6 6M1 13l6 6M7 13l-6 6" stroke="#8a7248" stroke-width="2"/>' + eye,
  vCsys: '<path d="M9 1v13h13M9 14l-7 8M6 4l3-3 3 3M19 11l3 3-3 3M2 17v5h5" fill="none" stroke="#8a7248" stroke-width="1.8"/>' + eye,
  vMore: '<path d="M1 1h20v10H1z" fill="#fff" stroke="#888" stroke-width="1.5"/>'
}

const Icon = (props) => h('svg', { class: 'icon', viewBox: '0 0 24 24', 'aria-hidden': 'true', innerHTML: art[props.name] })
Icon.props = ['name']

// Latin runs are about half the width of a Chinese character
const Mixed = (props) =>
  h('span', { class: 'mixed' }, props.text.split(/([\x20-\x7e]+)/).filter(Boolean).map((run) =>
    /[\x20-\x7e]/.test(run) ? h('span', { class: 'latin' }, run) : run
  ))
Mixed.props = ['text']

const quickIcons = [
  'page', 'window', 'arrow', 'open', 'save', 'check', 'move', 'model', 'saveCopy', 'props', 'erase', 'saveAs',
  'undo', 'arrowOff', 'redo', 'arrowOff', 'extrude', 'bend', 'bars', 'draft', 'shell', 'graph', 'gallery',
  'waves', 'curl', 'section', 'net', 'zebra', 'angle', 'measure', 'copy', 'paste', 'pasteList', 'fold',
  'mirror', 'block', 'level', 'teapot', 'picture', 'render', 'dots', 'jog', 'frame', 'spline', 'points',
  'planeOff', 'axisOff', 'sphereOff', 'eyeSave', 'eyeOff', 'eye', 'rainbow', 'dim', 'fx', 'ball', 'goldWave',
  'dock', 'ball', 'arrow', 'letter', 'swap', 'attach', 'server', 'brackets', 'box', 'arrow', 'cascade'
]

const tabs = [
  '文件', '模型', 'KK-工具箱-BOM', 'KK-工具箱-钣金', 'KK-工具箱_塑料', '分析', '实时仿真', '注释', '工具',
  '视图', '柔性建模', '应用程序', 'KK智能装配', 'KeyShot', '扫描'
]

const panels = ['参考', '选项', '相切', '主体选项', '属性']

const rows = [
  { text: 'PRT0125.PRT', icon: 'cube', level: 0, common: 'prt0125.prt' },
  { text: '设计项', icon: 'design', level: 1, toggle: 'closed' },
  { text: 'SIDE', icon: 'plane', level: 1 },
  { text: 'TOP', icon: 'plane', level: 1 },
  { text: 'FRONT', icon: 'plane', level: 1 },
  { text: 'START_PART', icon: 'csys', level: 1 },
  { text: '草绘 1', icon: 'curve', level: 1 },
  { text: 'insert', insert: true },
  { text: '扫描 1', icon: 'sweep', level: 1, toggle: 'opened', fresh: true },
  { text: '截面 1', icon: 'sketchOn', level: 2, fresh: true }
]

const viewIcons = [
  'vFit', 'vIn', 'vOut', 'vPaint', 'vBalls', 'vCube', 'vSaved', 'vShot', 'vPushR', 'vPushD', 'vPersp', 'vCut',
  'vDatum', 'vPlane', 'vAxis', 'vPoint', 'vCsys', 'vMore'
]

const faces = [
  { points: '1711,392 1932,464 1649,628 1385,679 1097,846 986,810', fill: '#8a979f' },
  { points: '986,810 1097,846 1091,1319 1514,1455 1512,1578 979,1408', fill: '#8b989f' },
  { points: '1097,846 1385,679 1379,1151 1091,1319', fill: '#50575e' },
  { points: '1385,679 1649,628 1645,975 1379,1151', fill: '#6c747c' },
  { points: '1649,628 1932,464 1928,812 1645,975', fill: '#50575e' },
  { points: '1928,812 2239,912 1955,1076 1645,975', fill: '#8a979f' },
  { points: '1645,975 1955,1076 1802,1288 1379,1151', fill: '#9fadb7' },
  { points: '1379,1151 1802,1288 1514,1455 1091,1319', fill: '#8a979f' },
  { points: '2239,912 1955,1076 1802,1288 1514,1455 1512,1578 2236,1161', fill: '#50575e' }
]
</script>

<style>
body {
  background: #f8fafc;
}
</style>

<style scoped>
.app {
  display: flex;
  flex-direction: column;
  min-height: 100vh;
  overflow: hidden;
  font-family: "Noto Sans CJK SC", sans-serif;
  font-size: 18px;
  line-height: 24px;
  color: #444;
}

.defs {
  position: absolute;
  width: 0;
  height: 0;
}

button {
  display: flex;
  align-items: center;
  justify-content: center;
  padding: 0;
  border: 0;
  background: none;
  font: inherit;
  color: inherit;
  white-space: nowrap;
}

h2, h3 {
  margin: 0;
}

.icon {
  flex: none;
  width: 24px;
  height: 24px;
}

.app :deep(.latin) {
  font-family: "Liberation Mono", monospace;
  font-size: 15px;
  line-height: 16px;
  white-space: pre;
}

/* quick access bar */
.quickbar {
  display: flex;
  align-items: center;
  height: 42px;
  background: #d9dfde;
  overflow: hidden;
}

.brand {
  flex: none;
  display: flex;
  align-items: center;
  gap: 6px;
  width: 112px;
  padding-left: 12px;
}

.brand-name {
  font-family: Inter, sans-serif;
  font-size: 26px;
  line-height: 32px;
  color: #505556;
}

.brand-name sup {
  font-size: 10px;
  line-height: 0;
  vertical-align: 8px;
}

.quick {
  flex: none;
  width: 36px;
  height: 36px;
}

.quick--arrow {
  width: 21px;
}

.quick--arrow .icon, .drop .icon {
  width: 18px;
  height: 18px;
}

/* ribbon tabs */
.tabs {
  display: flex;
  align-items: flex-end;
  height: 39px;
  background: #3d4546;
}

.tab {
  flex: none;
  height: 35px;
  padding: 0 36px;
  font-size: 19px;
  line-height: 34px;
  color: #fff;
  text-decoration: none;
  white-space: nowrap;
}

.tab :deep(.latin) {
  font-size: 18px;
}

.tab--file {
  padding: 0 30px;
  background: linear-gradient(170deg, #66d444, #50a832);
}

.tab--active {
  margin-left: 6px;
  background: #f8fafc;
  font-style: italic;
  color: #333;
}

/* ribbon */
.ribbon {
  display: flex;
  height: 146px;
  border-bottom: 2px solid #b3bcbc;
  background: #f8fafc;
}

.ribbon-feature {
  display: flex;
  align-items: center;
  justify-content: center;
  width: 84px;
  margin: 3px 0 4px;
  border-right: 1px solid #a8abab;
}

.ribbon-feature .icon {
  width: 50px;
  height: 42px;
}

.ribbon-body {
  display: flex;
  flex-direction: column;
  border-right: 1px solid #a0a5a6;
  margin: 3px 0 0;
}

.ribbon-groups {
  flex: 1;
  display: flex;
}

.group {
  margin: 2px 0 8px;
  padding-left: 20px;
  border-right: 1px solid #dcdfe0;
  box-sizing: border-box;
}

.group h3 {
  font-size: 19px;
  line-height: 22px;
  font-weight: 700;
  color: #3c3c3c;
}

.group--type {
  width: 166px;
}

.group--section {
  width: 121px;
}

.group--setting {
  width: 185px;
}

.group--options {
  width: 316px;
  margin: 0;
  padding-top: 2px;
  border-color: #a0a5a6;
}

.group--preview {
  display: flex;
  align-items: center;
  width: 294px;
  margin: 0;
  padding-bottom: 4px;
  border-color: #a0a5a6;
}

.group--finish {
  display: flex;
  gap: 20px;
  width: 162px;
  margin: 0;
  padding: 30px 0 0 30px;
  align-items: flex-start;
  border: 0;
}

.type-list {
  display: flex;
  gap: 2px;
  margin-top: 4px;
}

.type {
  flex-direction: column;
  justify-content: flex-start;
  width: 60px;
  height: 76px;
  padding-top: 8px;
  border-top: 5px solid #d2d4d5;
  box-sizing: border-box;
  color: #a5a8a9;
}

.type .icon {
  width: 25px;
  height: 23px;
}

.type--on {
  padding-top: 7px;
  border: 1px solid #78d0f8;
  border-top: 6px solid #70c8f4;
  background: #d0effe;
}

.type--on .icon {
  width: 23px;
}

.option {
  justify-content: flex-start;
  gap: 6px;
  height: 37px;
  margin: 2px 0 3px;
  padding: 0 5px;
  border: 1px solid transparent;
  color: #a8abac;
}

.option--on {
  border-color: #b3b5b6;
  background: #dedfe0;
}

.big {
  width: 60px;
  height: 60px;
  border: 1px solid #adb0b1;
  background: #dedfe0;
}

.big .icon {
  width: 42px;
  height: 32px;
}

.big--blue {
  margin-right: 8px;
  border-color: #78cdf7;
  background: #a0dffe;
}

.mini {
  width: 30px;
  height: 42px;
}

.mini:nth-child(2) .icon {
  width: 20px;
  height: 20px;
}

.mini:nth-child(3) {
  width: 48px;
}

.mini:nth-child(3) .icon, .mini--on .icon {
  width: 30px;
}

.mini--on {
  width: 42px;
  margin-right: 3px;
  border: 1px solid #b3b5b6;
  background: #dedfe0;
}

.finish {
  flex-direction: column;
  gap: 6px;
  font-size: 19px;
  color: #333;
}

.finish .icon {
  width: 42px;
  height: 32px;
}

.finish + .finish .icon {
  width: 34px;
}

.panels {
  display: flex;
  height: 29px;
  background: #f8fafc;
}

.panel-lead {
  width: 499px;
  margin-right: 1px;
  background: #e8eaeb;
}

.panel {
  width: 113px;
  margin-right: 1px;
  padding-bottom: 4px;
  background: #eeeff1;
  font-size: 18px;
  color: #a5a8a9;
}

.panel--wide {
  width: 149px;
}

.panel-tail {
  flex: 1;
  background: #e8eaeb;
}

/* work area */
.work {
  flex: 1;
  display: flex;
}

.side {
  display: flex;
  flex-direction: column;
  width: 583px;
  background: #d9dfde;
}

.side-tabs {
  display: flex;
  height: 44px;
}

.side-tab {
  gap: 7px;
  padding: 0 13px 2px;
  color: #333;
}

.side-tab--on {
  padding: 0 15px 2px;
  background: #f6fafb;
}

.side-tab .icon {
  width: 28px;
  height: 27px;
}

.side-tab--on .icon {
  width: 24px;
}

.side-body {
  flex: 1;
  display: flex;
  flex-direction: column;
  margin-right: 4px;
  background: #f6fafb;
}

.side-head {
  display: flex;
  align-items: center;
  height: 42px;
  padding: 0 14px 0 42px;
}

.side-head h2 {
  flex: 1;
  font-size: 19px;
  font-weight: 700;
  color: #3c3c3c;
}

.tool .icon {
  width: 30px;
  height: 29px;
}

.tool--last {
  margin-left: 6px;
}

.drop {
  width: 34px;
  height: 32px;
}

.filter {
  display: flex;
  align-items: center;
  height: 36px;
  padding: 0 12px 7px 17px;
}

.filter label {
  display: flex;
  width: 31px;
}

.filter-box {
  flex: 1;
  display: flex;
  align-items: center;
  height: 34px;
  padding-right: 7px;
  border: 1px solid #a9b7ba;
  background: #fff;
}

.filter-box input {
  flex: 1;
  min-width: 0;
  height: 30px;
  padding: 0 6px;
  border: 0;
  outline: none;
  background: none;
  font: inherit;
}

.filter-box .icon {
  width: 15px;
  height: 15px;
}

.filter .drop {
  width: 30px;
}

.add {
  width: 30px;
}

.add .icon {
  width: 17px;
  height: 17px;
}

.grid {
  flex: 1;
  margin: 0 8px 0 12px;
  background: linear-gradient(#e0e3e4, #e0e3e4) 359px 0 / 1px 100% no-repeat #f8fafc;
}

.grid table {
  width: 100%;
  table-layout: fixed;
  border-collapse: collapse;
}

.col-name {
  width: 180px;
}

.col-last {
  width: 20px;
}

.grid th {
  height: 24px;
  padding: 3px 7px 0;
  border-bottom: 1px solid #d0d3d4;
  background: #fbfbfa;
  font-family: "Liberation Mono", monospace;
  font-size: 15px;
  font-weight: 400;
  line-height: 24px;
  color: #222;
  text-align: left;
  white-space: nowrap;
  overflow: hidden;
}

.grid th + th {
  border-left: 1px solid #d8dbdc;
}

.grid .th-cjk {
  padding-right: 0;
  font-family: "Noto Sans CJK SC", sans-serif;
  font-size: 18px;
}

.grid td {
  height: 24px;
  padding: 0;
}

.grid .insert-row td {
  height: 20px;
}

.insert-line {
  height: 3px;
  background: #60c43c;
}

.node {
  display: flex;
  align-items: center;
  height: 24px;
  gap: 8px;
  overflow: hidden;
}

.node > .icon {
  width: 23px;
  height: 21px;
}

.node--0 {
  padding-left: 4px;
}

.node--name {
  padding-left: 2px;
}

.node--2 {
  padding-left: 65px;
}

.node--1 .toggle {
  display: flex;
  justify-content: center;
  width: 27px;
  margin-right: -1px;
  padding-left: 0;
}

.toggle .icon {
  width: 13px;
  height: 15px;
}

.node-text {
  display: flex;
  align-items: center;
  white-space: nowrap;
}

.node-text > .icon {
  width: 13px;
  height: 13px;
}

/* graphics area */
.view {
  flex: 1;
  display: flex;
  position: relative;
  min-width: 0;
  background: linear-gradient(#fff, #3d3d3d);
}

.model {
  width: 100%;
}

.faces polygon {
  stroke: #15181a;
  stroke-width: 1.4;
  stroke-linejoin: round;
}

.datum {
  fill: none;
  stroke: #dede38;
  stroke-width: 2;
}

.tag {
  font-family: "Liberation Mono", monospace;
  font-size: 20px;
  fill: #e8e8a8;
}

.axis {
  font-family: "Liberation Mono", monospace;
  font-size: 22px;
}

.viewbar {
  position: absolute;
  top: 10px;
  right: 0;
  display: flex;
  align-items: center;
  width: 673px;
  height: 44px;
  padding-left: 3px;
  border: 2px solid #b0b2b3;
  border-right: 0;
  background: #f8fafc;
  overflow: hidden;
}

.viewbar button {
  flex: none;
  width: 35px;
  height: 35px;
  margin: 0 2px;
  border: 1px solid transparent;
  box-sizing: border-box;
}

.viewbar .on {
  border-color: #b3b5b6;
  background: #dedfe0;
}

.watermark {
  position: absolute;
  right: 22px;
  bottom: 6px;
  color: #000;
}

.wm-name {
  position: relative;
  font-size: 41px;
  line-height: 50px;
  font-weight: 300;
  font-style: italic;
}

.wm-hot {
  color: #ff6a33;
}

.flame {
  position: absolute;
  top: -14px;
  left: 64px;
  width: 20px;
  height: 44px;
}

.wm-url {
  font-family: "Liberation Sans", sans-serif;
  font-size: 18px;
  font-style: italic;
  line-height: 18px;
  color: #929292;
}
</style>
